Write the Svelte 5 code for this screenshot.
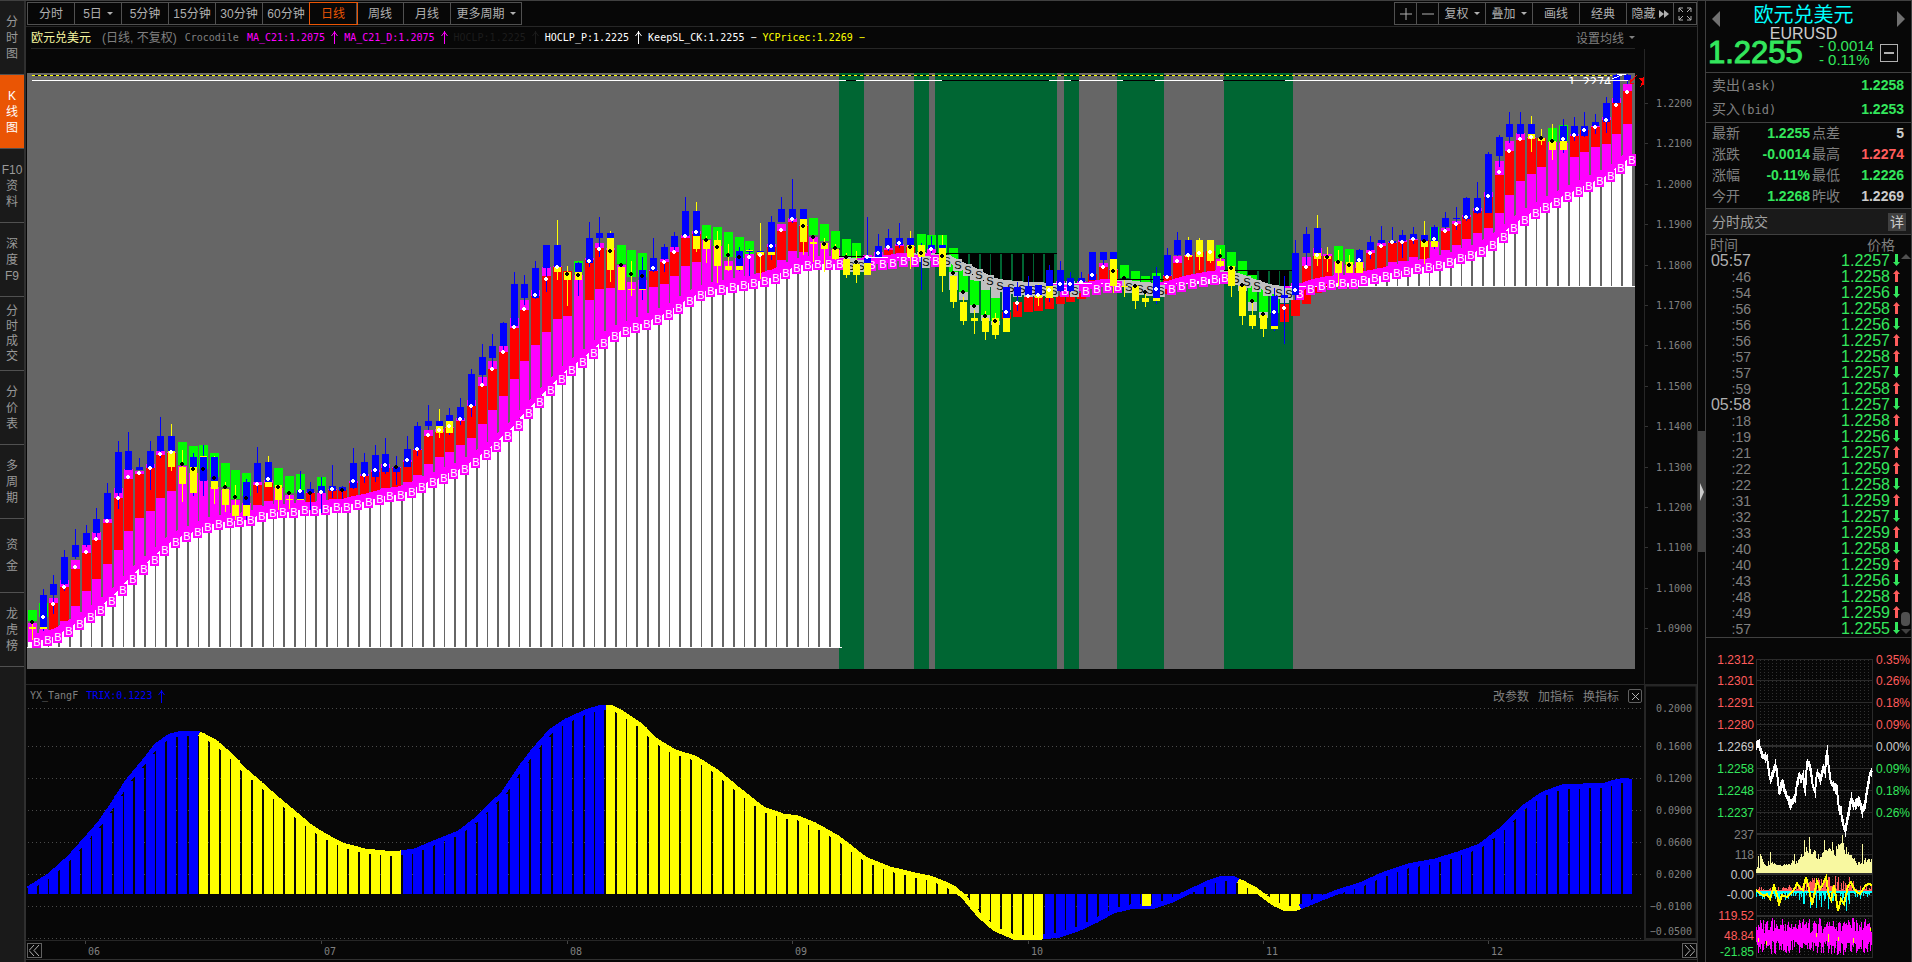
<script lang="ts">
	type Span = { c: string; a: number; b: number } | null;

	const sideTabs = [
		['分', '时', '图'],
		['K', '线', '图'],
		['F10', '资', '料'],
		['深', '度', 'F9'],
		['分', '时', '成', '交'],
		['分', '价', '表'],
		['多', '周', '期'],
		['资', '金'],
		['龙', '虎', '榜']
	];

	const periods = ['分时', '5日', '5分钟', '15分钟', '30分钟', '60分钟', '日线', '周线', '月线', '更多周期'];
	let period = $state('日线');
	let side = $state(1);

	// one line per bar: wick, blue body, yellow body, back block, column top, dot
	const raw = `y623-640 - 627-629 g610-621 623 k622
b589-631 595-627 627-629 g603-617 629 w617
b575-614 584-595 - r603-631 598 w604
b550-591 557-584 - r587-621 580 w587
b529-559 545-557 - r569-606 560 w567
b525-547 533-545 - r553-591 545 w552
b508-539 519-533 - r540-579 532 w539
b483-520 493-519 - r523-564 519 w521
b441-509 452-493 - r498-550 488 w498
b432-470 451-470 - r479-531 469 w477
b458-470 467-470 - r474-518 471 w473
b441-490 451-468 - r468-511 464 w468
b417-458 436-451 - r455-498 451 w454
y424-471 436-451 451-467 r453-491 452 w452
y450-502 - 467-484 g442-465 466 k464
b453-496 457-467 467-493 g446-468 473 k469
b445-496 457-481 456-457 g445-469 480 k469
y456-504 457-481 481-489 g453-477 487 k478
y482-512 - 489-505 g463-487 490 k487
y485-520 - 505-516 g470-499 500 k497
b479-520 482-505 505-516 g473-496 503 k498
b447-493 463-482 - r485-505 482 w484
y456-482 462-482 482-487 r483-501 480 w479
y485-510 - 485-500 g468-487 488 k487
y493-509 - 499-500 g476-493 495 k493
b471-499 490-499 499-500 g474-493 500 w491
b482-510 489-493 - r493-503 492 k493
b477-513 486-493 - g477-490 493 w492
b465-498 486-491 - r490-505 489 w489
b486-499 487-491 - r490-502 490 k490
b448-489 463-488 - r483-498 481 w481
b453-483 462-476 - r476-496 474 w475
b445-482 455-477 - r472-492 470 w470
b438-474 454-472 - r468-488 464 w465
b456-485 467-472 - r468-487 467 k467
b436-467 449-467 - r462-482 460 w460
b422-456 426-450 - r450-475 449 w449
b405-430 421-426 - r436-464 430 w435
y409-438 421-426 426-433 r432-457 429 w430
b408-435 415-421 421-433 r428-452 427 w426
b398-425 407-420 - r421-445 418 w419
b369-417 374-406 - r406-438 400 w406
b344-386 357-375 - r386-424 377 w385
b334-369 346-358 - r369-410 361 w369
b322-352 323-346 - r352-396 346 w352
b272-328 284-326 - r328-379 318 w327
b275-305 284-298 - r310-361 300 w309
b261-299 268-298 - r296-345 290 w295
b245-292 245-268 - r276-332 267 w279
y220-280 245-267 267-272 r267-319 266 w267
y266-306 - 272-280 r271-316 271 k274
b262-296 263-272 272-280 g261-272 275 k275
b222-267 238-263 - r260-300 258 w261
b217-257 233-238 - r248-289 243 w249
y231-282 233-238 238-270 r250-288 248 k251
y267-290 - 267-290 g245-264 265 k265
y261-296 - 289-290 g250-277 282 k274
b257-300 270-289 289-290 g253-277 280 k276
b238-272 258-271 - r271-287 270 w268
b244-272 247-259 - r262-284 259 w262
b232-252 236-247 - r252-276 247 w252
b197-238 211-236 - r238-266 235 w236
y202-252 211-236 236-249 r234-262 231 w232
y236-263 - 240-249 g225-239 240 k240
y231-283 - 240-266 g227-246 246 k247
y244-271 - 266-270 g232-257 261 k255
b247-271 251-266 266-270 g237-258 258 k257
b249-276 251-252 250-251 g241-254 254 w257
y223-279 251-252 252-255 r253-273 253 w255
b216-260 222-252 252-255 r247-270 244 w246
b197-222 209-222 - r231-260 224 w230
b179-223 209-219 - r222-251 218 w219
y219-255 209-219 219-242 r226-252 225 k226
y239-262 - 242-244 g218-235 237 k237
y238-272 - 243-249 g224-241 243 k244
y244-260 - 249-259 g231-248 250 k248
y253-278 - 259-275 g239-256 257 k257
y251-283 - 264-275 g243-258 259 k262
b217-263 258-263 263-275 r257-266 255 w257
b234-256 246-257 - - 252 w253
b229-251 238-248 - r250-261 248 w247
b223-248 238-245 - r246-257 244 w243
y231-269 238-245 245-257 r247-257 246 k247
b243-290 - 245-257 g234-251 252 k253
b236-253 245-249 - g235-249 249 w249
y235-292 245-248 248-276 g235-254 256 k256
y274-308 - 276-302 g248-272 290 k273
y297-325 - 302-321 g265-292 300 k292
y310-334 - 318-321 g280-305 313 k306
y311-340 - 318-332 g290-315 321 k316
y313-339 - 318-335 g298-321 325 k321
b287-318 287-318 318-332 r312-319 310 w312
b282-311 287-296 - r302-317 297 w303
b276-296 286-295 - r297-312 297 w296
y284-306 285-295 295-298 r297-311 297 w295
b265-302 270-286 286-298 r298-309 297 w290
b261-292 270-291 - r296-304 281 w284
b272-292 278-291 - r295-302 281 w284
b272-282 278-282 - r293-299 281 w282
b252-280 252-280 - r274-284 275 w275
b252-266 252-260 - r267-283 263 w267
y259-293 252-259 259-286 r270-283 269 k271
y280-297 - 286-287 g265-278 279 k278
y285-309 - 286-301 g271-284 285 k286
y293-307 - 298-302 g276-292 293 k292
b267-304 276-298 298-301 g273-289 290 w289
b248-277 255-276 - r276-294 275 w277
b232-256 240-255 - r263-282 256 w261
y237-260 240-255 255-257 r256-281 255 w255
y238-270 - 240-257 r252-278 252 w253
y240-263 - 240-261 r251-273 251 w252
y249-267 - 261-266 g245-258 259 k256
y266-297 - 266-286 g252-267 270 k268
y285-325 - 286-316 g261-280 291 k285
y303-329 - 315-326 g275-302 311 k301
y315-337 - 315-329 g288-312 318 k314
b288-331 296-326 326-329 g294-313 313 w312
b276-344 295-298 - r304-322 303 w308
b240-300 253-295 - r300-316 283 w290
b227-266 234-253 - r266-304 257 w267
y215-266 228-253 253-259 r256-293 248 w255
y247-272 - 256-259 r256-288 254 k257
y250-286 - 261-273 g246-261 262 k262
y255-273 - 262-273 g249-264 265 k265
b249-262 250-262 262-273 r268-278 262 w260
b236-259 242-250 - r253-273 250 w253
b226-246 240-243 - r246-268 243 w246
b227-242 241-243 - r243-262 242 w242
b230-258 235-241 - r242-261 240 w242
b227-244 234-239 - r240-257 239 w239
y221-264 235-241 241-247 r240-259 240 k241
b225-249 227-241 241-247 g227-240 242 w239
b212-232 218-227 - r231-250 228 w231
b207-230 218-219 - r224-245 221 w224
b197-221 198-219 - r217-239 215 w217
b182-214 198-213 - r211-233 208 w209
b152-213 154-213 - r197-228 192 w196
b135-167 137-156 - r175-213 161 w172
b112-143 124-137 - r151-195 141 w151
b112-139 124-134 - r140-181 133 w139
y116-152 124-134 134-139 r138-174 137 w137
y129-145 - 138-141 r138-167 138 k138
y124-160 - 141-150 g128-142 142 k141
b119-153 126-141 141-150 g125-141 143 w139
b117-141 126-136 - r136-157 134 w135
b112-137 126-136 - r130-152 130 w130
b114-134 122-126 - r127-147 126 w127
b97-133 103-122 - r120-144 117 w120
b74-103 75-103 - r103-134 98 w105
b74-84 75-80 - r91-124 84 w92`;

	const line = [
		642, 640, 637, 631, 624, 617, 610, 601, 590, 579, 569, 560, 550, 542, 536, 532, 527, 524, 522, 521,
		520, 516, 513, 512, 512, 510, 510, 509, 507, 507, 504, 502, 499, 496, 495, 492, 487, 482, 478, 473,
		469, 462, 454, 446, 436, 425, 413, 402, 390, 379, 370, 362, 353, 343, 336, 331, 327, 324, 319, 314,
		308, 301, 295, 291, 289, 287, 285, 283, 281, 278, 273, 268, 265, 264, 264, 264, 266, 266, 265, 264,
		263, 261, 261, 262, 261, 261, 265, 270, 275, 281, 286, 288, 289, 290, 290, 291, 291, 291, 291, 289,
		287, 287, 287, 289, 290, 291, 289, 286, 283, 281, 279, 278, 279, 282, 286, 290, 293, 294, 294, 289,
		286, 284, 283, 283, 280, 278, 276, 273, 271, 268, 267, 265, 262, 258, 255, 251, 245, 237, 228, 220,
		213, 207, 202, 196, 191, 186, 181, 176, 168, 160
	];

	const shorts: [number, number][] = [[76, 77], [83, 83], [85, 95], [97, 97], [102, 105], [112, 117]];
	const isShort = (i: number) => shorts.some(([a, b]) => i >= a && i <= b);

	// zero level of the column area, by first bar
	const bases: [number, number][] = [[0, 647], [76, 257], [85, 253], [96, 283], [102, 279], [106, 283], [112, 270], [118, 286]];
	const baseAt = (i: number) => bases.filter(([a]) => a <= i).at(-1)![1];

	const colors: Record<string, string> = { r: '#f00', g: '#0f0', b: '#00f', y: '#ff0', k: '#000', w: '#fff' };
	const barX = (i: number) => Math.round(32 + i * 10.705);

	function span(s: string, fallback = ''): Span {
		if (s === '-') return null;
		const c = /[a-z]/.test(s[0]) ? s[0] : fallback;
		const [a, b] = s.replace(/^[a-z]/, '').split('-').map(Number);
		return { c: colors[c], a, b };
	}

	const bars = raw.split('\n').map((row, i) => {
		const [wick, blue, yellow, back, top, dot] = row.trim().split(' ');
		const short = isShort(i);
		return {
			x: barX(i),
			line: line[i],
			base: baseAt(i),
			short,
			fill: short ? '#c0c0c0' : '#f0f',
			wick: span(wick)!,
			bodies: [span(blue, 'b'), span(yellow, 'y')].filter((s) => s !== null),
			back: span(back),
			top: Number(top),
			dot: Number(dot.slice(1)),
			dotColor: colors[dot[0]]
		};
	});

	const greenZones = [[839, 864], [914, 929], [935, 1057], [1064, 1079], [1117, 1164], [1224, 1293]];
	const blackTop = [[846, 856], [942, 1049], [1071, 1079], [1123, 1155], [1223, 1285]];
	const levels = [
		[839, 864, 256, '#000'], [868, 935, 257, '#fff'], [935, 1057, 253, '#000'], [1053, 1117, 283, '#fff'],
		[1117, 1164, 279, '#000'], [1164, 1228, 283, '#fff'], [1224, 1293, 270, '#000'], [1290, 1635, 286, '#fff'], [27, 842, 647, '#fff']
	];

	const priceTicks = Array.from({ length: 14 }, (_, i) => ({
		label: (1.22 - i * 0.01).toFixed(4),
		y: Math.round(103 + i * 40.4)
	}));

	const trix = [
		[28, 889], [50, 875], [70, 857], [85, 840], [100, 823], [113, 804], [127, 782], [142, 764], [157, 745], [170, 736],
		[183, 733], [197, 733], [204, 736], [215, 742], [229, 754], [243, 769], [257, 781], [275, 797], [294, 813], [312, 828],
		[327, 837], [342, 845], [365, 851], [385, 853], [400, 853], [415, 851], [429, 845], [459, 833], [477, 819], [491, 805],
		[503, 794], [519, 770], [534, 750], [551, 731], [566, 721], [588, 711], [602, 707], [611, 707], [622, 713], [640, 725],
		[655, 740], [675, 752], [695, 758], [717, 772], [740, 791], [763, 809], [783, 816], [798, 818], [815, 825], [838, 838],
		[865, 859], [890, 869], [915, 875], [930, 878], [945, 884], [955, 889], [965, 898], [980, 916], [995, 929], [1014, 937],
		[1042, 937], [1060, 935], [1080, 928], [1097, 920], [1113, 911], [1130, 907], [1155, 906], [1175, 899], [1182, 895], [1195, 889],
		[1210, 882], [1222, 878], [1232, 878], [1243, 883], [1256, 890], [1265, 897], [1275, 904], [1284, 908], [1297, 908], [1305, 905],
		[1322, 898], [1340, 891], [1360, 885], [1382, 875], [1408, 866], [1435, 861], [1458, 854], [1480, 846], [1502, 829], [1524, 807],
		[1543, 794], [1562, 787], [1605, 785], [1615, 782], [1625, 780], [1632, 782]
	];
	const trixParts: [number, number, string][] = [
		[28, 199, '#00f'], [199, 401, '#ff0'], [401, 606, '#00f'], [606, 1043, '#ff0'],
		[1043, 1238, '#00f'], [1238, 1300, '#ff0'], [1300, 1640, '#00f']
	];

	function lerp(points: number[][], x: number) {
		const k = Math.max(1, points.findIndex((p) => p[0] >= x));
		const [x0, y0] = points[k - 1];
		const [x1, y1] = points[k];
		return y0 + ((y1 - y0) * (x - x0)) / (x1 - x0);
	}

	const trixBars = bars.map((b) => ({
		x: b.x,
		y: Math.round(lerp(trix, Math.min(b.x, 1631))),
		color: trixParts.find(([a, z]) => b.x >= a && b.x < z)?.[2] ?? '#00f'
	}));

	const trixLines = trixParts.map(([a, z, color]) => {
		const end = Math.min(z, 1632);
		const inner = trix.filter(([x]) => x > a && x < end);
		return { color, points: [[a, lerp(trix, a)], ...inner, [end, lerp(trix, end)]].map((p) => p.join(',')).join(' ') };
	});

	const trixTicks = [
		['0.2000', 708], ['0.1600', 746], ['0.1200', 778], ['0.0900', 810],
		['0.0600', 842], ['0.0200', 874], ['−0.0100', 906], ['−0.0500', 931]
	] as [string, number][];
	const gridRows = [708, 746, 778, 810, 842, 874, 906, 938];
	const months = [['06', 85], ['07', 321], ['08', 567], ['09', 792], ['10', 1028], ['11', 1263], ['12', 1488]] as [string, number][];

	const quotes = [
		['最新', '1.2255', 'up', '点差', '5', 'flat'],
		['涨跌', '-0.0014', 'up', '最高', '1.2274', 'hot'],
		['涨幅', '-0.11%', 'up', '最低', '1.2226', 'up'],
		['今开', '1.2268', 'up', '昨收', '1.2269', 'flat']
	];

	const ticks = `05:57 1.2257 d
:46 1.2258 u
:54 1.2256 d
:56 1.2258 u
:56 1.2256 d
:56 1.2257 u
:57 1.2258 u
:57 1.2257 d
:59 1.2258 u
05:58 1.2257 d
:18 1.2258 u
:19 1.2256 d
:21 1.2257 u
:22 1.2259 u
:22 1.2258 d
:31 1.2259 u
:32 1.2257 d
:33 1.2259 u
:40 1.2258 d
:40 1.2259 u
:43 1.2256 d
:48 1.2258 u
:49 1.2259 u
:57 1.2255 d`.split('\n').map((t) => t.trim().split(' '));

	const miniLeft = [
		['1.2312', 660, '#ff5c5c'], ['1.2301', 681, '#ff5c5c'], ['1.2291', 703, '#ff5c5c'], ['1.2280', 725, '#ff5c5c'],
		['1.2269', 747, '#ccc'], ['1.2258', 769, '#33e65c'], ['1.2248', 791, '#33e65c'], ['1.2237', 813, '#33e65c'],
		['237', 835, '#808080'], ['118', 855, '#808080'], ['0.00', 875, '#ccc'], ['-0.00', 895, '#ccc'],
		['119.52', 916, '#ff5c5c'], ['48.84', 936, '#ff5c5c'], ['-21.85', 952, '#33e65c']
	] as [string, number, string][];
	const miniRight = [
		['0.35%', 660, '#ff5c5c'], ['0.26%', 681, '#ff5c5c'], ['0.18%', 703, '#ff5c5c'], ['0.09%', 725, '#ff5c5c'],
		['0.00%', 747, '#ccc'], ['0.09%', 769, '#33e65c'], ['0.18%', 791, '#33e65c'], ['0.26%', 813, '#33e65c']
	] as [string, number, string][];

	const miniPath = [
		[0, 745], [3, 743], [4, 750], [6, 755], [8, 757], [11, 757], [12, 765], [14, 780], [17, 772], [19, 764],
		[21, 773], [23, 790], [26, 783], [29, 792], [31, 798], [34, 804], [37, 800], [39, 798], [41, 783], [43, 775],
		[45, 780], [47, 773], [49, 793], [51, 763], [53, 765], [55, 773], [57, 787], [59, 792], [61, 772], [64, 780],
		[67, 768], [69, 772], [71, 750], [73, 770], [75, 783], [78, 787], [81, 790], [83, 810], [85, 810], [86, 820],
		[89, 832], [91, 820], [93, 810], [95, 798], [97, 805], [101, 802], [103, 800], [106, 812], [109, 803], [111, 790],
		[114, 773], [116, 771]
	];
	const miniLine = miniPath.map(([x, y]) => `${1756 + x},${y}`).join(' ');
	const rand = (n: number) => Math.abs(Math.sin(n * 12.9898) * 43758.5453) % 1;
	const volShape = [5, 14, 9, 11, 10, 8, 7, 8, 10, 11, 13, 18, 27, 24, 20, 18, 20, 23, 22, 22, 26, 30, 24, 17, 13, 10, 9, 13, 12, 10];
	const volSpikes: Record<number, number> = { 2: 17, 4: 19, 5: 17, 14: 21, 38: 19, 48: 33, 50: 26, 53: 36, 58: 23, 68: 33, 76: 31, 83: 28, 84: 29, 86: 38, 92: 21, 106: 29, 115: 14 };
	const mini = Array.from({ length: 116 }, (_, x) => {
		const wave = x > 45 && x < 98 ? 1 : 0.35;
		return {
			x,
			price: Math.round(lerp(miniPath, x)),
			jitter: 5 + Math.round(rand(x + 3) * 7),
			vol: volSpikes[x] ?? Math.round(volShape[Math.floor(x / 4)] * (0.75 + rand(x) * 0.4)),
			red: Math.round(rand(x + 40) ** 2 * 14 * wave) + 1,
			cyan: Math.round(rand(x + 90) ** 3 * 20 * wave) + 1,
			hi: 918 + Math.round(rand(x + 200) * 15),
			lo: 940 + Math.round(rand(x + 300) * 15)
		};
	});
	const osc = [
		[0, 890], [4, 893], [8, 896], [11, 894], [14, 899], [18, 886], [21, 895], [23, 904], [26, 895], [31, 897],
		[36, 892], [39, 888], [41, 883], [44, 888], [47, 890], [50, 877], [53, 889], [56, 905], [58, 896], [61, 881],
		[64, 889], [67, 884], [70, 877], [73, 896], [75, 900], [78, 885], [80, 897], [82, 911], [85, 899], [88, 904],
		[92, 886], [95, 882], [98, 889], [101, 892], [104, 894], [107, 889], [110, 885], [113, 884], [116, 885]
	].map(([x, y]) => `${1756 + x},${y}`).join(' ');
</script>

<div class="app">
	<nav class="side">
		{#each sideTabs as chars, i}
			<button class:active={side === i} class:wide={chars.length === 2} class:tight={chars.length === 4} onclick={() => (side = i)}>
				{#each chars as ch}<span>{ch}</span>{/each}
			</button>
		{/each}
	</nav>

	<main>
		<div class="toolbar">
			<div class="group">
				{#each periods as p}
					<button class:more={p === '更多周期'} class:active={period === p} onclick={() => (period = p)}>
						{p}{#if p === '5日' || p === '更多周期'}<i class="caret"></i>{/if}
					</button>
				{/each}
			</div>
			<div class="group right">
				<button class="small" aria-label="放大"><svg width="12" height="12"><path d="M0 6h12M6 0v12" /></svg></button>
				<button class="small" aria-label="缩小"><svg width="12" height="12"><path d="M0 6h12" /></svg></button>
				<button>复权<i class="caret"></i></button>
				<button>叠加<i class="caret"></i></button>
				<button>画线</button>
				<button>经典</button>
				<button class="hide">隐藏<svg width="10" height="8"><path class="solid" d="M0 0l5 4l-5 4zM5 0l5 4l-5 4z" /></svg></button>
				<button class="small" aria-label="全屏">
					<svg width="14" height="14"><path d="M1 5V1h4M1 1l4 4M9 1h4v4M13 1l-4 4M1 9v4h4M1 13l4-4M13 9v4H9M13 13l-4-4" /></svg>
				</button>
			</div>
		</div>

		<div class="legend">
			<b>欧元兑美元</b>
			<span class="cjk">(日线, 不复权)</span>
			<span class="system">Crocodile</span>
			<span style="color: #f0f">MA_C21:1.2075 {@render arrow()}</span>
			<span style="color: #f0f">MA_C21_D:1.2075 {@render arrow()}</span>
			<span style="color: #1c1c1c">HOCLP:1.2225 {@render arrow()}</span>
			<span style="color: #fff">HOCLP_P:1.2225 {@render arrow()}</span>
			<span style="color: #fff">KeepSL_CK:1.2255 −</span>
			<span style="color: #ff0">YCPricec:1.2269 −</span>
			<button class="setma">设置均线<i class="caret"></i></button>
		</div>

		<div class="row price">
			<svg class="plot" viewBox="26 49 1618 635" preserveAspectRatio="none" shape-rendering="crispEdges">
				<clipPath id="area"><rect x="27" y="73" width="1608" height="596" /></clipPath>
				<clipPath id="peak"><rect x="1560" y="73" width="52" height="11" /></clipPath>
				<rect x="27" y="73" width="1608" height="596" fill="#666" />
				{#each greenZones as [a, b]}
					<rect x={a} y="73" width={b - a} height="596" fill="#063" />
				{/each}
				<g clip-path="url(#area)">
					{#each bars as b}
						<rect x={b.x - 4} y={Math.min(b.line, b.base)} width="9" height={Math.abs(b.base - b.line)} fill={b.short ? '#000' : '#fff'} />
					{/each}
					{#each bars as b}
						<rect x={b.x - 4} y={Math.min(b.top, b.line)} width="9" height={Math.abs(b.line - b.top)} fill={b.fill} />
						{#if b.back}
							<rect x={b.x - 4} y={b.back.a} width="9" height={b.back.b - b.back.a} fill={b.back.c} />
						{/if}
					{/each}
					{#each bars.slice(1) as b, i}
						<path d="M{bars[i].x} {bars[i].line - 8}L{b.x} {b.line - 8}V{b.line}L{bars[i].x} {bars[i].line}Z" fill={b.fill} />
					{/each}
					{#each levels as [a, b, y, color]}
						<path d="M{a} {y}.5H{b}" stroke={color} />
					{/each}
				</g>
				{#each bars as b}
					<rect x={b.x} y={b.line - 6} width="9" height="12" fill={b.fill} />
					<text class="mark" x={b.x + 5} y={b.line + 4} fill={b.short ? '#000' : '#fff'}>{b.short ? 'S' : 'B'}</text>
				{/each}
				{#each bars as b}
					<rect x={b.x} y={b.wick.a} width="1" height={b.wick.b - b.wick.a} fill={b.wick.c} />
					{#each b.bodies as body}
						<rect x={b.x - 3} y={body.a} width="7" height={Math.max(1, body.b - body.a)} fill={body.c} />
					{/each}
					<path d="M{b.x - 1} {b.dot - 2}h2v1h1v2h-1v1h-2v-1h-1v-2h1z" fill={b.dotColor} />
				{/each}
				<path d="M32 75.5H1612" stroke="#000" />
				<path d="M32 75.5H1612" stroke="#ff0" stroke-dasharray="3 3" />
				<path d="M32 80.5H1628" stroke="#fff" />
				{#each blackTop as [a, b]}
					<path d="M{a} 80.5H{b}" stroke="#000" />
				{/each}
				<g clip-path="url(#peak)"><text class="peak" x="1568" y="86">1.2274</text></g>
				<path d="M1612 79l12-5M1617 74h9" stroke="#fff" fill="none" />
				<path d="M1637 75l-7 8v-4M1630 83h4" stroke="#f00" fill="none" />
				<path d="M1645 73l-2 5h-5l4 4l-2 5l5-3z" fill="#f00" />
			</svg>
			<svg class="axis" viewBox="1644 49 53 635" width="53" height="635">
				<path d="M1644.5 49V684" stroke="#262626" />
				{#each priceTicks as t}
					<path d="M1645 {t.y}.5h3" stroke="#333" />
					<text x="1656" y={t.y + 4}>{t.label}</text>
				{/each}
			</svg>
		</div>

		<div class="row trix">
			<svg class="plot" viewBox="26 685 1618 255" preserveAspectRatio="none" shape-rendering="crispEdges">
				{#each gridRows as y}
					<path d="M28 {y}.5H1644" stroke="#4a4a4a" stroke-dasharray="1 3" />
				{/each}
				{#each trixBars as b}
					<rect x={b.x - 4} y={Math.min(b.y, 894)} width="9" height={Math.abs(894 - b.y)} fill={b.color} />
				{/each}
				{#each trixLines as l}
					<polyline points={l.points} stroke={l.color} stroke-width="5" fill="none" />
				{/each}
				<rect x="1142" y="894" width="9" height="12" fill="#ff0" />
			</svg>
			<svg class="axis" viewBox="1644 685 53 255" width="53" height="255">
				<path d="M1645 685V939M1644 685.5H1697M1644 939H1697M1696.5 685V939" stroke="#262626" stroke-width="2" fill="none" />
				{#each trixTicks as [label, y]}
					<text x="1692" y={y + 4} text-anchor="end">{label}</text>
				{/each}
			</svg>
			<div class="trixhead">
				<span>YX_TangF</span>
				<span class="blue">TRIX:0.1223 {@render arrow()}</span>
				<div class="actions">
					<button>改参数</button>
					<button>加指标</button>
					<button>换指标</button>
					<button class="close" aria-label="关闭"><svg width="9" height="9"><path d="M1 1l7 7M8 1l-7 7" /></svg></button>
				</div>
			</div>
		</div>

		<div class="timeline">
			<button aria-label="向左"><svg width="11" height="11"><path d="M5 0L0 5.5L5 11M10 0L5 5.5L10 11" /></svg></button>
			<svg class="months" viewBox="42 941 1640 19" preserveAspectRatio="none">
				{#each months as [m, x]}
					<path d="M{x}.5 941v3" stroke="#444" />
					<text x={x + 3} y="955">{m}</text>
				{/each}
			</svg>
			<button aria-label="向右"><svg width="11" height="11"><path d="M1 0L6 5.5L1 11M6 0L11 5.5L6 11" /></svg></button>
		</div>
	</main>

	<div class="splitter"><button aria-label="收起"><i></i></button></div>

	<aside>
		<header>
			<button class="prev" aria-label="上一个"></button>
			<button class="next" aria-label="下一个"></button>
			<h1>欧元兑美元</h1>
			<div class="code">EURUSD</div>
			<div class="last">
				<strong>1.2255</strong>
				<div class="chg"><span>- 0.0014</span><span>- 0.11%</span></div>
				<button class="minus" aria-label="移除"></button>
			</div>
		</header>

		<div class="book">
			<div><span>卖出<em>(ask)</em></span><b class="up">1.2258</b></div>
			<div><span>买入<em>(bid)</em></span><b class="up">1.2253</b></div>
		</div>

		<div class="quotes">
			{#each quotes as q}
				<div><span>{q[0]}</span><b class={q[2]}>{q[1]}</b><span>{q[3]}</span><b class={q[5]}>{q[4]}</b></div>
			{/each}
		</div>

		<div class="section">分时成交<button>详</button></div>

		<div class="list">
			<table>
				<thead><tr><th>时间</th><th>价格</th></tr></thead>
				<tbody>
					{#each ticks as [time, price, dir]}
						<tr>
							<td class:minute={time.length > 3}>{time}</td>
							<td>
								{price}<svg width="7" height="12" class={dir}>
									{#if dir === 'u'}
										<path d="M3.5 0L7 4H5V12H2V4H0z" />
									{:else}
										<path d="M3.5 12L7 8H5V0H2V8H0z" />
									{/if}
								</svg>
							</td>
						</tr>
					{/each}
				</tbody>
			</table>
			<div class="scroll"><i class="su"></i><i class="thumb"></i><i class="sd"></i></div>
		</div>

		<svg class="mini" viewBox="1706 638 205 322">
			<g shape-rendering="crispEdges">
				{#each Array(28) as _, i}
					<path d="M{1760 + i * 4}.5 660V957" stroke="#303030" stroke-dasharray="1 2" />
				{/each}
				<path d="M1756 659.5H1873M1756 680.5H1873M1756 702.5H1873M1756 724.5H1873M1756 768.5H1873M1756 790.5H1873M1756 812.5H1873M1756 854.5H1873M1756 895.5H1873M1756.5 659V957M1872.5 659V957M1756 957.5H1873" stroke="#2a2a2a" fill="none" />
				<path d="M1756 746H1873M1756 834H1873M1756 874H1873M1756 916H1873" stroke="#2e2e2e" stroke-width="2" />
				<polyline points={miniLine} stroke="#fff" stroke-width="2" fill="none" />
				{#each mini as m}
					<rect x={1756 + m.x} y={m.price - Math.floor(m.jitter / 2)} width="1" height={m.jitter} fill="#fff" />
					<rect x={1756 + m.x} y={873 - m.vol} width="1" height={m.vol} fill="#f8f8a0" />
					<rect x={1756 + m.x} y={891 - m.red} width="1" height={m.red} fill="#ff5c5c" />
					<rect x={1756 + m.x} y="891" width="1" height={m.cyan + 1} fill="#0ff" />
					<rect x={1756 + m.x} y={m.hi} width="1" height={m.lo - m.hi} fill="#f0f" />
				{/each}
				<polyline points={osc} stroke="#ff0" stroke-width="2" fill="none" />
				<path d="M1758 938v4M1766 941v4M1816 933v4M1828 934v8M1838 937v4M1853 938v5M1870 928v3" stroke="#ff0" />
			</g>
			{#each miniLeft as [t, y, color]}
				<text x="1754" y={y + 4} text-anchor="end" fill={color}>{t}</text>
			{/each}
			{#each miniRight as [t, y, color]}
				<text x="1876" y={y + 4} fill={color}>{t}</text>
			{/each}
		</svg>
	</aside>
</div>

{#snippet arrow()}
	<svg class="arrow" width="7" height="13"><path d="M3.5 0V13M0.5 5L3.5 1L6.5 5" /></svg>
{/snippet}

<style>
	:global(body) {
		margin: 0;
		background: #070707;
	}

	.app {
		display: flex;
		min-height: 100vh;
		box-sizing: border-box;
		border-top: 1px solid #404040;
		background: #070707;
		color: #808080;
		font: 12px/16px 'Liberation Sans', 'Noto Sans CJK SC', sans-serif;
		overflow: hidden;
	}

	button {
		margin: 0;
		padding: 0;
		border: 0;
		background: none;
		color: inherit;
		font: inherit;
		cursor: pointer;
	}

	svg {
		display: block;
	}

	.side {
		flex: none;
		width: 24px;
		border-right: 2px solid #303030;
		background: #1a1a1a;
	}

	.side button {
		display: flex;
		flex-direction: column;
		align-items: center;
		justify-content: center;
		width: 24px;
		height: 74px;
		box-sizing: border-box;
		border-bottom: 1px solid #505050;
		color: #999;
		line-height: 16px;
	}

	.side button.wide {
		line-height: 21px;
	}

	.side button.tight {
		line-height: 15px;
	}

	.side button.active {
		background: #ea5504;
		color: #fff;
	}

	main {
		flex: 1;
		min-width: 0;
		border-right: 1px solid #303030;
	}

	.toolbar {
		display: flex;
		justify-content: space-between;
		height: 26px;
		padding: 1px 0 0 1px;
		box-sizing: border-box;
		border-bottom: 1px solid #262626;
	}

	.group {
		display: flex;
		height: 23px;
		box-sizing: border-box;
		border: 1px solid #505050;
	}

	.group button {
		display: flex;
		align-items: center;
		justify-content: center;
		width: 47px;
		box-sizing: border-box;
		border-right: 1px solid #505050;
		color: #b0b0b0;
		white-space: nowrap;
	}

	.group button:last-child {
		border-right: 0;
	}

	.group button.more {
		width: 70px;
	}

	.group button.small {
		width: 22px;
	}

	.group button.active {
		color: #ea5504;
		outline: 1px solid #ea5504;
	}

	.caret {
		width: 0;
		height: 0;
		margin-left: 5px;
		border: 3px solid transparent;
		border-top-color: currentColor;
		border-bottom: 0;
	}

	.hide svg {
		margin-left: 3px;
	}

	button svg path {
		fill: none;
		stroke: #b0b0b0;
	}

	button svg path.solid {
		fill: #b0b0b0;
		stroke: none;
	}

	.legend {
		display: flex;
		align-items: center;
		gap: 6px;
		height: 21px;
		margin: 0 62px 0 5px;
		border-bottom: 1px solid #262626;
		font: 10px/16px 'DejaVu Sans Mono', 'Noto Sans CJK SC', monospace;
		white-space: nowrap;
	}

	.legend b {
		margin-right: 5px;
		color: #f8f8a0;
		font-size: 12px;
		font-weight: 400;
	}

	.legend .cjk {
		margin-right: 2px;
		font: 12px/16px 'Liberation Sans', 'Noto Sans CJK SC', sans-serif;
	}

	.legend .system {
		margin-right: 2px;
	}

	.arrow {
		display: inline-block;
		vertical-align: middle;
	}

	.arrow path {
		fill: none;
		stroke: currentColor;
	}

	.setma {
		display: flex;
		align-items: center;
		margin-left: auto;
		font: 12px/16px 'Noto Sans CJK SC', sans-serif;
	}

	.row {
		position: relative;
		display: flex;
	}

	.price {
		height: 635px;
	}

	.plot {
		flex: 1;
		min-width: 0;
		height: 100%;
	}

	.axis {
		flex: none;
	}

	.axis text,
	.months text {
		fill: #808080;
		font: 10px 'DejaVu Sans Mono', monospace;
	}

	.mark {
		font: 11px 'Liberation Sans', sans-serif;
		text-anchor: middle;
	}

	.peak {
		fill: #fff;
		font: 12px 'DejaVu Sans Mono', monospace;
	}

	.trix {
		height: 255px;
		border-top: 1px solid #262626;
	}

	.trixhead {
		position: absolute;
		top: 3px;
		left: 4px;
		right: 55px;
		display: flex;
		align-items: center;
		gap: 8px;
		font: 10px/16px 'DejaVu Sans Mono', monospace;
	}

	.trixhead .blue {
		color: #00f;
	}

	.actions {
		display: flex;
		align-items: center;
		gap: 9px;
		margin-left: auto;
		font: 12px/16px 'Noto Sans CJK SC', sans-serif;
	}

	.close {
		display: grid;
		place-items: center;
		width: 14px;
		height: 14px;
		border: 1px solid #606060;
		border-radius: 2px;
	}

	.timeline {
		display: flex;
		align-items: center;
		height: 20px;
		padding-left: 1px;
		box-sizing: border-box;
		border-top: 1px solid #262626;
		border-bottom: 1px solid #303030;
	}

	.timeline button {
		display: grid;
		place-items: center;
		flex: none;
		width: 15px;
		height: 15px;
		box-sizing: border-box;
		border: 1px solid #606060;
	}

	.months {
		flex: 1;
		min-width: 0;
		height: 19px;
	}

	.splitter {
		display: flex;
		align-items: center;
		flex: none;
		width: 7px;
		border-right: 1px solid #404040;
	}

	.splitter button {
		display: flex;
		align-items: center;
		width: 7px;
		height: 121px;
		margin-top: 20px;
		background: #404040;
	}

	.splitter i {
		border: 9px solid transparent;
		border-left: 4px solid #ccc;
		border-right: 0;
		margin-left: 2px;
	}

	aside {
		flex: none;
		width: 205px;
		border-right: 1px solid #404040;
	}

	header {
		position: relative;
		height: 72px;
		border-bottom: 1px solid #404040;
		box-sizing: border-box;
		text-align: center;
	}

	h1 {
		margin: 0;
		padding-right: 10px;
		color: #0ff;
		font: 400 20px/25px 'Noto Sans CJK SC', sans-serif;
	}

	.code {
		padding-right: 10px;
		color: #ccc;
		font-size: 16px;
		line-height: 16px;
	}

	.prev,
	.next {
		position: absolute;
		top: 10px;
		border: 8px solid transparent;
	}

	.prev {
		left: 6px;
		border-left: 0;
		border-right-color: #707070;
	}

	.next {
		right: 6px;
		border-right: 0;
		border-left-color: #707070;
	}

	.last {
		position: absolute;
		left: 2px;
		right: 13px;
		top: 38px;
		display: flex;
		align-items: center;
		justify-content: space-between;
		color: #33e65c;
	}

	.last strong {
		font-size: 31px;
		line-height: 28px;
		font-weight: 400;
		-webkit-text-stroke: 1px #33e65c;
	}

	.chg {
		display: flex;
		flex-direction: column;
		margin-left: 10px;
		font-size: 15px;
		line-height: 14px;
		text-align: left;
	}

	.minus {
		width: 18px;
		height: 18px;
		box-sizing: border-box;
		border: 1px solid #b0b0b0;
		background: linear-gradient(#b0b0b0, #b0b0b0) center / 10px 2px no-repeat;
	}

	.up {
		color: #33e65c;
	}

	.hot {
		color: #ff5c5c;
	}

	.flat {
		color: #ccc;
	}

	.book,
	.quotes {
		padding: 0 7px 1px 6px;
		border-bottom: 1px solid #404040;
		font-size: 14px;
	}

	.book div {
		display: flex;
		justify-content: space-between;
		line-height: 24px;
	}

	.book em {
		font: 12px 'DejaVu Sans Mono', monospace;
	}

	.quotes div {
		display: grid;
		grid-template-columns: 28px 1fr 30px 64px;
		line-height: 21px;
		text-align: right;
	}

	.quotes span {
		white-space: nowrap;
	}

	.section {
		display: flex;
		align-items: center;
		justify-content: space-between;
		height: 26px;
		padding: 0 5px 0 6px;
		box-sizing: border-box;
		border-bottom: 1px solid #404040;
		background: #1a1a1a;
		color: #a0a0a0;
		font-size: 14px;
	}

	.section button {
		width: 18px;
		height: 18px;
		background: #404040;
		color: #ccc;
		line-height: 18px;
	}

	.list {
		display: flex;
		height: 402px;
		border-bottom: 1px solid #404040;
	}

	table {
		flex: 1;
		border-collapse: collapse;
	}

	th {
		padding: 0;
		height: 18px;
		font: 14px/18px 'Noto Sans CJK SC', sans-serif;
		text-align: left;
	}

	th:first-child {
		padding-left: 4px;
	}

	th:last-child {
		padding-right: 5px;
		text-align: right;
	}

	td {
		padding: 0;
		height: 16px;
		line-height: 16px;
	}

	td:first-child {
		width: 45px;
		font-size: 14px;
		text-align: right;
	}

	td.minute:first-child {
		color: #b0b0b0;
		font-size: 16px;
	}

	td:last-child {
		color: #33e65c;
		font-size: 16px;
		text-align: right;
	}

	td svg {
		display: inline-block;
		margin-left: 3px;
	}

	.u {
		fill: #ff5c5c;
	}

	.d {
		fill: #33e65c;
	}

	.scroll {
		display: flex;
		flex-direction: column;
		align-items: center;
		width: 11px;
		padding: 19px 0 3px;
		box-sizing: border-box;
	}

	.su,
	.sd {
		border: 5px solid transparent;
	}

	.su {
		border-top: 0;
		border-bottom-color: #505050;
		margin-bottom: auto;
	}

	.sd {
		border-bottom: 0;
		border-top-color: #404040;
	}

	.thumb {
		width: 9px;
		height: 14px;
		margin-bottom: 3px;
		border-radius: 4px;
		background: #505050;
	}

	.mini {
		width: 100%;
	}

	.mini text {
		font: 12px 'Liberation Sans', sans-serif;
	}
</style>
